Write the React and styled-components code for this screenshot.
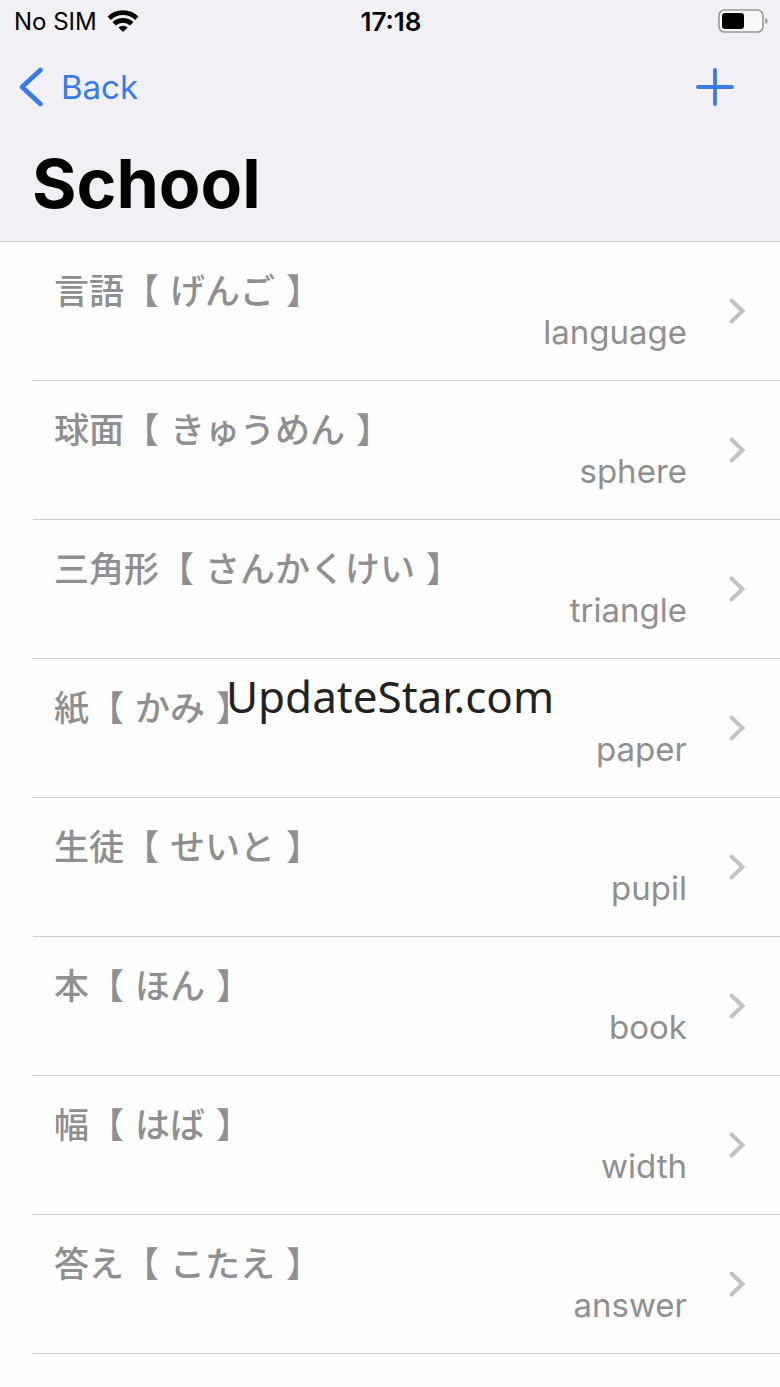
import React from 'react';
import styled, { createGlobalStyle } from 'styled-components';

const Colors = {
  blue: '#3a7bea',
  bar: '#f1f0f5',
  line: '#cbcbcd',
  gray: '#8f8f91',
  chevron: '#c2c2c4',
};

const GlobalStyle = createGlobalStyle`
  * {
    box-sizing: border-box;
  }

  body {
    margin: 0;
    background: #fefefe;
    font-family: Inter, 'Noto Sans CJK JP', sans-serif;
  }
`;

const Page = styled.div`
  position: relative;
  min-height: 100vh;
`;

const TopArea = styled.header`
  background: ${Colors.bar};
  border-bottom: 1px solid ${Colors.line};
`;

const StatusBar = styled.div`
  display: grid;
  grid-template-columns: 1fr auto 1fr;
  align-items: center;
  height: 42px;
  padding: 0 12px 0 14px;
`;

const Carrier = styled.div`
  display: flex;
  align-items: center;
  gap: 10px;
  font-size: 24px;
`;

const Clock = styled.time`
  font-size: 26px;
  font-weight: 600;
`;

const BatterySlot = styled.div`
  display: flex;
  justify-content: flex-end;
`;

const NavBar = styled.nav`
  display: flex;
  justify-content: space-between;
  align-items: center;
  height: 90px;
  padding: 0 46px 0 18px;
`;

const BackLink = styled.a`
  display: flex;
  align-items: center;
  gap: 16px;
  color: ${Colors.blue};
  font-size: 33px;
  text-decoration: none;
`;

const AddButton = styled.button`
  display: flex;
  padding: 0;
  border: 0;
  background: none;
  color: ${Colors.blue};
  cursor: pointer;
`;

const Title = styled.h1`
  margin: 0;
  padding: 10px 32px 17px;
  font-size: 68px;
  font-weight: 700;
  line-height: 82px;
`;

const WordList = styled.ul`
  margin: 0;
  padding: 0 0 0 33px;
  list-style: none;
`;

const WordRow = styled.li`
  border-bottom: 1px solid ${Colors.line};
`;

const WordLink = styled.a`
  display: flex;
  align-items: center;
  gap: 40px;
  height: 138px;
  padding: 0 33px 0 21px;
  color: ${Colors.gray};
  text-decoration: none;
`;

const WordText = styled.div`
  flex: 1;
  display: flex;
  flex-direction: column;
`;

const Term = styled.div`
  display: flex;
  font-family: 'Noto Sans CJK JP', sans-serif;
  font-size: 35px;
  font-weight: 500;
  line-height: 42px;
`;

const Reading = styled.span`
  padding: 0 11px;
`;

const Meaning = styled.span`
  align-self: flex-end;
  font-size: 33px;
  line-height: 44px;
`;

const Watermark = styled.div`
  position: absolute;
  top: 662px;
  left: 0;
  right: 0;
  color: #222;
  font-family: 'Noto Sans', sans-serif;
  font-size: 44px;
  line-height: 68px;
  text-align: center;
  pointer-events: none;
`;

const words = [
  { kanji: '言語', kana: 'げんご', meaning: 'language' },
  { kanji: '球面', kana: 'きゅうめん', meaning: 'sphere' },
  { kanji: '三角形', kana: 'さんかくけい', meaning: 'triangle' },
  { kanji: '紙', kana: 'かみ', meaning: 'paper' },
  { kanji: '生徒', kana: 'せいと', meaning: 'pupil' },
  { kanji: '本', kana: 'ほん', meaning: 'book' },
  { kanji: '幅', kana: 'はば', meaning: 'width' },
  { kanji: '答え', kana: 'こたえ', meaning: 'answer' },
];

function WifiIcon() {
  return (
    <svg width="32" height="24" viewBox="0 0 32 24" fill="none" stroke="#000" strokeWidth="4.8" aria-hidden="true">
      <path d="M2.2 9.2a20 20 0 0 1 27.6 0" />
      <path d="M7.2 14.8a12.8 12.8 0 0 1 17.6 0" />
      <path d="M16 23l-4.6-4.5a6.6 6.6 0 0 1 9.2 0z" fill="#000" stroke="none" />
    </svg>
  );
}

function BatteryIcon() {
  return (
    <svg width="50" height="24" viewBox="0 0 50 24" aria-hidden="true">
      <rect x="1" y="1" width="44" height="22" rx="5.5" fill="#f8f8fa" stroke="#98989b" strokeWidth="1.6" />
      <rect x="4" y="4" width="22" height="16" rx="3" fill="#000" />
      <path d="M47.4 9v6c1.4-.5 2-1.6 2-3s-.6-2.5-2-3z" fill="#8e8e91" />
    </svg>
  );
}

function BackIcon() {
  return (
    <svg width="27" height="42" viewBox="0 0 27 42" fill="none" stroke="currentColor" strokeWidth="4.8" strokeLinecap="round" strokeLinejoin="round" aria-hidden="true">
      <path d="M22.5 4L4 21l18.5 17" />
    </svg>
  );
}

function PlusIcon() {
  return (
    <svg width="38" height="38" viewBox="0 0 38 38" stroke="currentColor" strokeWidth="3.8" strokeLinecap="round" aria-hidden="true">
      <path d="M19 2v34M2 19h34" />
    </svg>
  );
}

function ChevronIcon() {
  return (
    <svg width="20" height="28" viewBox="0 0 20 28" fill="none" stroke={Colors.chevron} strokeWidth="4" strokeLinecap="round" aria-hidden="true">
      <path d="M4.5 3.5l11 10.500-11 10.500" />
    </svg>
  );
}

export default function App() {
  return (
    <Page>
      <GlobalStyle />
      <TopArea>
        <StatusBar>
          <Carrier>
            No SIM
            <WifiIcon />
          </Carrier>
          <Clock>17:18</Clock>
          <BatterySlot>
            <BatteryIcon />
          </BatterySlot>
        </StatusBar>
        <NavBar>
          <BackLink href="#back">
            <BackIcon />
            Back
          </BackLink>
          <AddButton type="button" aria-label="Add word">
            <PlusIcon />
          </AddButton>
        </NavBar>
        <Title>School</Title>
      </TopArea>

      <WordList>
        {words.map(word => (
          <WordRow key={word.kanji}>
            <WordLink href={`#${word.meaning}`}>
              <WordText>
                <Term lang="ja">
                  <span>{word.kanji}</span>
                  <span>【</span>
                  <Reading>{word.kana}</Reading>
                  <span>】</span>
                </Term>
                <Meaning>{word.meaning}</Meaning>
              </WordText>
              <ChevronIcon />
            </WordLink>
          </WordRow>
        ))}
      </WordList>

      <Watermark>UpdateStar.com</Watermark>
    </Page>
  );
}
